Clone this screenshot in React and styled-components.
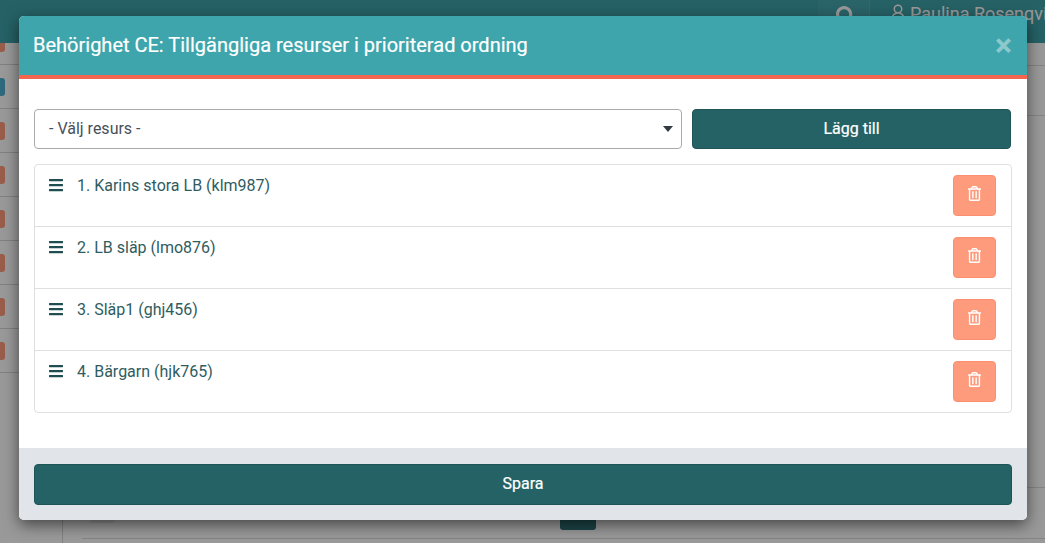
import React from "react";
import styled, { createGlobalStyle } from "styled-components";
import { FaBars, FaRegTrashAlt, FaSearch } from "react-icons/fa";
import { UserRound } from "lucide-react";

const Global = createGlobalStyle`
  html, body { margin: 0; padding: 0; height: 100%; overflow: hidden; }
  body { font-family: Roboto, "Liberation Sans", sans-serif; background: #fff; }
`;

const Page = styled.div`
  position: relative;
  width: 1045px;
  height: 543px;
  overflow: hidden;
  background: #fff;
  display: flex;
  flex-direction: column;
`;
const TopBar = styled.header`
  position: relative;
  z-index: 1;
  height: 43px;
  flex: none;
  background: #3ea2a8;
  display: flex;
  justify-content: flex-end;
  color: #fff;
`;
const SearchCell = styled.div`
  width: 52px;
  box-sizing: border-box;
  padding: 6px 0 0 18px;
  font-size: 20px;
  line-height: 1;
  background: #46a5ad;
  border-right: 1px solid #55aeb5;
`;
const UserCell = styled.div`
  width: 175px;
  box-sizing: border-box;
  padding: 3px 0 0 20px;
  display: flex;
  gap: 3px;
  align-items: flex-start;
  font-size: 18px;
  line-height: 21px;
  white-space: nowrap;
  overflow: hidden;
  svg { flex: none; margin-left: -1px; }
`;
const Under = styled.div`
  flex: 1;
  display: flex;
  background: #fff;
`;
const Side = styled.aside`
  width: 63px;
  flex: none;
  box-sizing: border-box;
  margin-top: -22px;
  border-right: 1px solid #d6d6d6;
  display: flex;
  flex-direction: column;
`;
const SideRow = styled.div`
  height: 44px;
  flex: none;
  box-sizing: border-box;
  border-bottom: 1px solid #d6d6dc;
  display: flex;
  align-items: center;
`;
const Badge = styled.span`
  width: 5px;
  height: 18px;
  border-radius: 0 3px 3px 0;
  background: ${(p) => p.$c};
`;
const Main = styled.div`
  flex: 1;
  padding-left: 19px;
  display: flex;
  flex-direction: column;
`;
const MainRow = styled.div`
  height: ${(p) => p.$h}px;
  flex: none;
  box-sizing: border-box;
  border-bottom: 1px solid #dcdcdc;
  display: flex;
  align-items: flex-start;
`;
const PagerChip = styled.span`
  margin-left: ${(p) => p.$left}px;
  margin-top: ${(p) => p.$top}px;
  width: ${(p) => p.$w}px;
  height: ${(p) => p.$height}px;
  flex: none;
  border-radius: 3px;
  background: ${(p) => p.$c};
`;
const Backdrop = styled.div`
  position: absolute;
  inset: 0;
  z-index: 2;
  background: rgba(0, 0, 0, 0.4);
`;
const Modal = styled.section`
  position: absolute;
  z-index: 3;
  left: 19px;
  top: 16px;
  width: 1008px;
  height: 504px;
  background: #fff;
  border-radius: 5px;
  overflow: hidden;
  box-shadow: 0 5px 15px rgba(0, 0, 0, 0.55);
  display: flex;
  flex-direction: column;
`;
const ModalHead = styled.div`
  height: 59px;
  flex: none;
  background: #3da5ab;
  border-bottom: 4px solid #f4664f;
  display: flex;
  align-items: center;
  justify-content: space-between;
  padding: 0 15px;
`;
const Title = styled.h5`
  margin: 0 0 1px -1px;
  font-size: 20px;
  font-weight: 400;
  color: #fff;
  -webkit-text-stroke: 0.2px #fff;
`;
const Close = styled.span`
  font-size: 32px;
  font-weight: 700;
  line-height: 1;
  color: #fff;
  opacity: 0.4;
  margin: 0 0 2px;
`;
const ModalBody = styled.div`
  flex: 1;
  padding: 30px 15px 0;
  display: flex;
  flex-direction: column;
  gap: 15px;
`;
const PickRow = styled.div`
  display: flex;
  gap: 10px;
  padding-right: 1px;
`;
const Select = styled.div`
  width: 648px;
  height: 40px;
  box-sizing: border-box;
  border: 1px solid #aaaaaa;
  border-radius: 4px;
  display: flex;
  align-items: center;
  justify-content: space-between;
  padding: 0 8px 2px 14px;
  font-size: 16px;
  color: #495057;
`;
const Caret = styled.span`
  width: 0;
  height: 0;
  margin-top: 2px;
  border-left: 5px solid transparent;
  border-right: 5px solid transparent;
  border-top: 6px solid #343a40;
`;
const PrimaryButton = styled.button`
  flex: ${(p) => (p.$full ? "none" : 1)};
  height: ${(p) => (p.$full ? "41px" : "40px")};
  width: ${(p) => (p.$full ? "100%" : "auto")};
  background: #256265;
  border: 1px solid #1f5457;
  border-radius: 4px;
  color: #fff;
  font: 400 16px Roboto, sans-serif;
  -webkit-text-stroke: 0.2px #fff;
  padding: 0 0 2px;
`;
const List = styled.ul`
  margin: 0;
  padding: 0;
  list-style: none;
  border: 1px solid #dfdfdf;
  border-radius: 4px;
`;
const Item = styled.li`
  height: 62px;
  box-sizing: border-box;
  padding: 10px 15px 0 13px;
  display: flex;
  align-items: flex-start;
  color: #2f5c60;
  font-size: 16px;
  line-height: 20px;
  border-top: 1px solid #dfdfdf;
  &:first-child { height: 61px; border-top: 0; }
`;
const Handle = styled.span`
  width: 29px;
  flex: none;
  color: #1f4e50;
  font-size: 16px;
  display: flex;
  padding-top: 2px;
`;
const Label = styled.span`
  flex: 1;
  padding-top: 1px;
`;
const DeleteButton = styled.button`
  width: 43px;
  height: 41px;
  background: #ff9b7d;
  border: 1px solid #fb8f70;
  border-radius: 4px;
  color: #fff;
  font-size: 15px;
  display: flex;
  align-items: center;
  justify-content: center;
  padding: 0 0 4px;
`;
const Foot = styled.div`
  height: 72px;
  flex: none;
  box-sizing: border-box;
  background: #e1e4e9;
  padding: 16px 15px;
`;

const items = ["1. Karins stora LB (klm987)", "2. LB släp (lmo876)", "3. Släp1 (ghj456)", "4. Bärgarn (hjk765)"];
const badges = ["#ff9b7d", "#4fb0d0", "#ff9b7d", "#ff9b7d", "#ff9b7d", "#ff9b7d", "#ff9b7d", "#ff9b7d"];

export default function App() {
  return (
    <>
      <Global />
      <Page>
        <TopBar>
          <SearchCell><FaSearch /></SearchCell>
          <UserCell><UserRound size={18} strokeWidth={2} />Paulina Rosenqvist</UserCell>
        </TopBar>
        <Under>
          <Side>
            {badges.map((c, i) => (
              <SideRow key={i}><Badge $c={c} /></SideRow>
            ))}
          </Side>
          <Main>
            <MainRow $h={23} />
            <MainRow $h={50} />
            <MainRow $h={372} />
            <MainRow $h={51}>
              <PagerChip $left={8} $top={14} $w={25} $height={21} $c="#eeeeee" />
              <PagerChip $left={445} $top={14} $w={36} $height={28} $c="#2f7477" />
            </MainRow>
          </Main>
        </Under>
        <Backdrop />
        <Modal>
          <ModalHead>
            <Title>Behörighet CE: Tillgängliga resurser i prioriterad ordning</Title>
            <Close>×</Close>
          </ModalHead>
          <ModalBody>
            <PickRow>
              <Select>- Välj resurs -<Caret /></Select>
              <PrimaryButton>Lägg till</PrimaryButton>
            </PickRow>
            <List>
              {items.map((t) => (
                <Item key={t}>
                  <Handle><FaBars /></Handle>
                  <Label>{t}</Label>
                  <DeleteButton><FaRegTrashAlt /></DeleteButton>
                </Item>
              ))}
            </List>
          </ModalBody>
          <Foot><PrimaryButton $full>Spara</PrimaryButton></Foot>
        </Modal>
      </Page>
    </>
  );
}
